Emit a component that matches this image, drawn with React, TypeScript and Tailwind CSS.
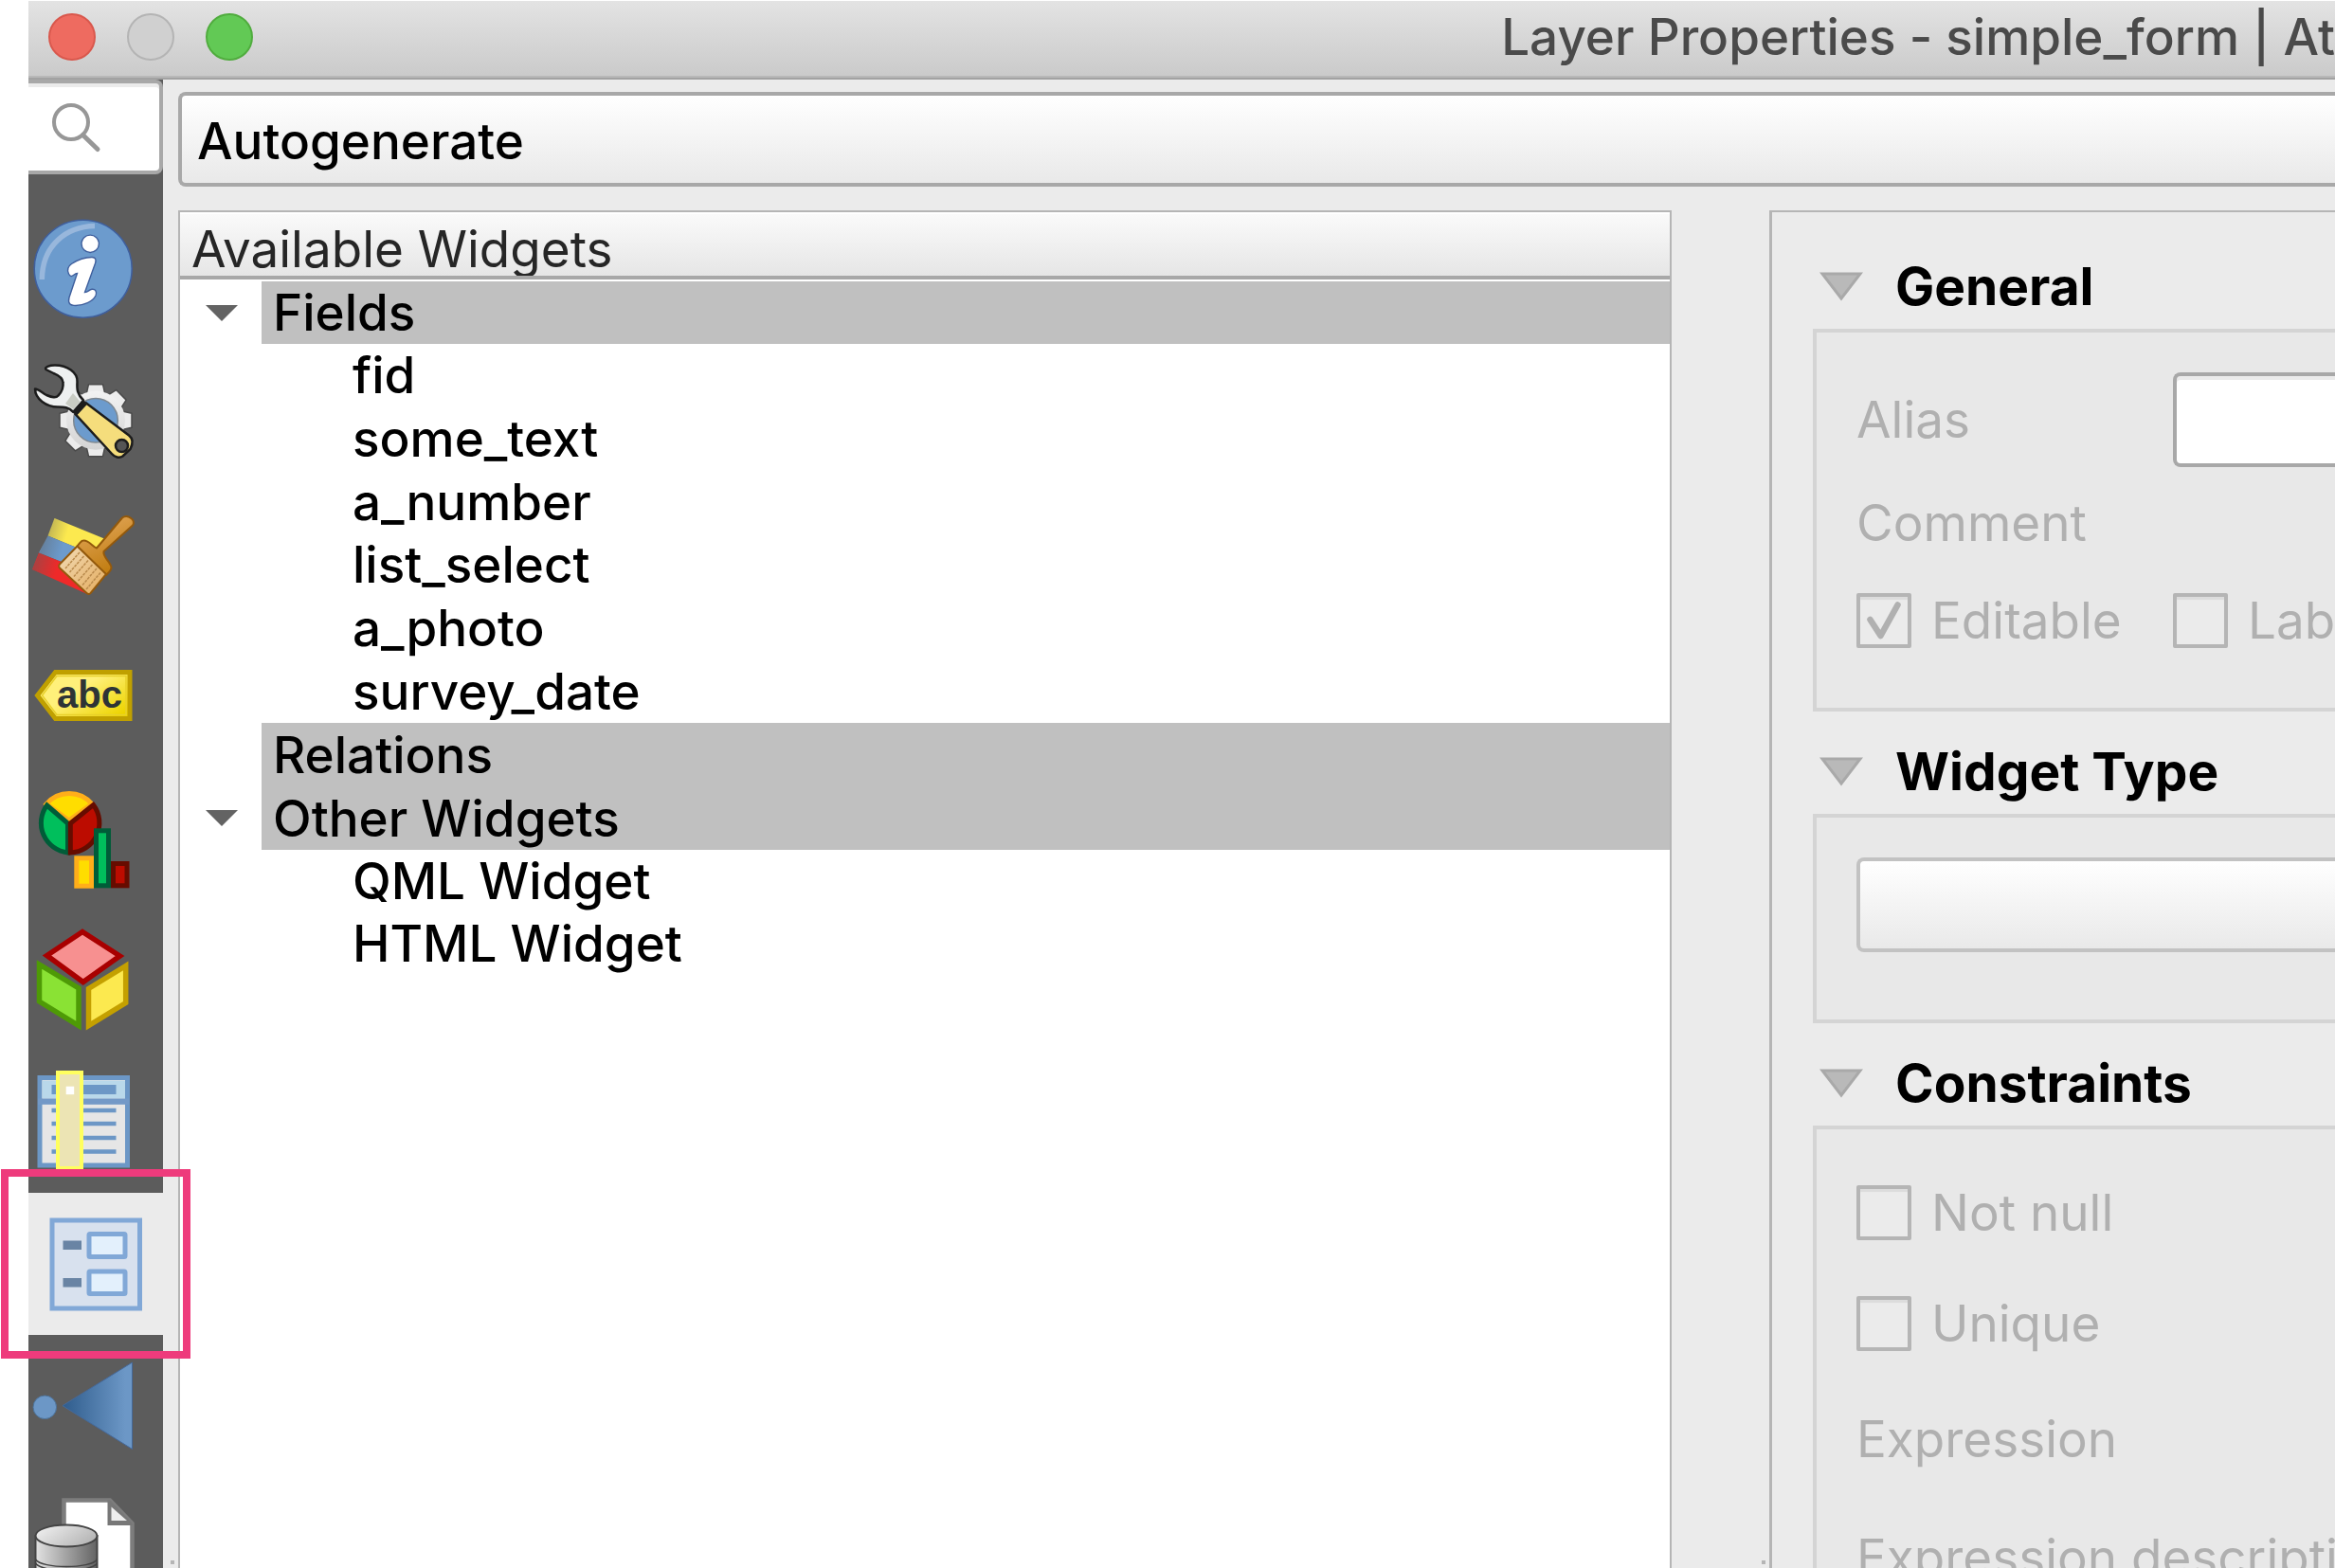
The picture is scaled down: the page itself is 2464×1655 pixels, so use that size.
import type { ReactNode } from 'react';

function Drawing({ children }: { children: ReactNode }) {
  return (
    <svg viewBox="0 0 142 150" className="block h-[150px] w-[142px]" aria-hidden="true">
      {children}
    </svg>
  );
}

function InfoIcon() {
  return (
    <Drawing>
      <circle cx="57.7" cy="74.7" r="51.5" fill="#6c9bcd" stroke="#3f5f9d" strokeWidth="1.6" />
      <path d="M70 29.500C40 30 14.500 50 14.300 86" fill="none" stroke="#98b7dc" strokeWidth="5.500" />
      <circle cx="65.200" cy="48.300" r="9.200" fill="#fff" stroke="#3f5f9d" strokeWidth="1.400" />
      <path
        d="M42.500 80C40.500 76 42 72 45.500 69.500C53 64.500 60 62.500 67 62.500C71.500 62.500 71.500 66 70.500 69L59.500 99.500C63 99.500 64 96.500 67 96.300C71 96 72.500 99 71 103C68 109.500 58 113.500 50 113.500C43.500 113.500 41.500 111 43 105L51.500 79.500C48.500 79.500 47 83 45 82.500C43.500 82.300 43 81 42.500 80Z"
        fill="#fff"
        stroke="#3f5f9d"
        strokeWidth="1.400"
      />
    </Drawing>
  );
}

function SourceIcon() {
  return (
    <Drawing>
      <defs>
        <linearGradient id="gear" x1="0" y1="0" x2="0" y2="1">
          <stop offset="0" stopColor="#f2f2f2" />
          <stop offset="1" stopColor="#d4d4d4" />
        </linearGradient>
      </defs>
      <g transform="translate(71 84.7)">
        <g fill="#ececec" stroke="#4a4a4a" strokeWidth="1.500" strokeLinejoin="round">
          {[0, 45, 90, 135, 180, 225, 270, 315].map((a) => (
            <path key={a} d="M-10 -27L-7.500 -38H7.500L10 -27Z" transform={`rotate(${a})`} />
          ))}
        </g>
        <circle r="31" fill="url(#gear)" />
        <circle r="23.300" fill="#6c9bcd" stroke="#7d8790" strokeWidth="1.500" />
      </g>
      <path
        d="M61 66.500L106 100.500C110.500 104 110 110 107.500 115L99.500 122.500C96 125 91 123.500 88 120L49.500 78Z"
        fill="#f5dd7c"
        stroke="#1c1c1c"
        strokeWidth="2.500"
      />
      <circle cx="98.500" cy="111.500" r="6.500" fill="#555" stroke="#1c1c1c" strokeWidth="2.500" />
      <path
        d="M18.500 31C16.500 28.500 22 26.500 28 26.500C41 26.500 52 34 51.500 44C51 52 51.500 57 58 63.500L47.500 76C42 70.500 38 70.500 31 70.500C19 70.500 7 62 7 51.500C11 51.500 14 55.500 19 58C25 60.500 29 61.500 31.500 58.500C35.500 54.500 37 49 36.500 44.500C36 38.500 30 36.500 26.500 35Z"
        fill="#eef0f0"
        stroke="#1c1c1c"
        strokeWidth="2.500"
        strokeLinejoin="round"
      />
      <path d="M47 56L54.500 65L47.500 73L39 67Z" fill="#c9ccc4" />
      <path d="M60 65L48.500 77.500" stroke="#1c1c1c" strokeWidth="6.500" />
    </Drawing>
  );
}

function SymbologyIcon() {
  return (
    <Drawing>
      <defs>
        <linearGradient id="fade" x1="0" y1="0" x2="1" y2="0.3">
          <stop offset="0" stopColor="#5c5c5c" stopOpacity="0.750" />
          <stop offset="0.500" stopColor="#5c5c5c" stopOpacity="0" />
        </linearGradient>
        <linearGradient id="wood" x1="0" y1="0" x2="0.400" y2="1">
          <stop offset="0" stopColor="#e6ab62" />
          <stop offset="1" stopColor="#c17d11" />
        </linearGradient>
        <linearGradient id="hair" x1="0" y1="0" x2="1" y2="1">
          <stop offset="0" stopColor="#f2dcb8" />
          <stop offset="1" stopColor="#e4ab5c" />
        </linearGradient>
      </defs>
      <path d="M27.500 38L80 59.500L68 76L20.500 56.500Z" fill="#fce94f" />
      <path d="M20.500 56.500L68 76L55 92L11 74.500Z" fill="#6c9bcd" />
      <path d="M11 74.500L62 95V118L4 92Z" fill="#ef2929" />
      <path d="M27.500 38L80 59.500L62 118L4 92Z" fill="url(#fade)" />
      <path
        d="M99 37.500C105 33.500 114 40 110 45.500L79.500 73C78 79 87 84 87.500 90C87.500 93 84.500 95.500 82 98L51.500 67.500C54 64.500 55.500 61.500 58 61.500C64 61 67.500 68 72 69.500Z"
        fill="url(#wood)"
        stroke="#93590c"
        strokeWidth="2"
        strokeLinejoin="round"
      />
      <path
        d="M51.500 67.500L82 97L65.500 117C64.500 118.500 62.500 118 61.500 117L33 90.500C32 89.500 32 87.500 33 86.500Z"
        fill="url(#hair)"
        stroke="#93590c"
        strokeWidth="2"
      />
      <path
        d="M54 74L39 91M58.500 78L43.500 95M63 82.500L48 99.500M67.500 87L52.500 104M72 91L57 108.500M76 95.500L61 113"
        stroke="#b98a4c"
        strokeWidth="1.500"
        strokeDasharray="3 1"
      />
    </Drawing>
  );
}

function LabelsIcon() {
  return (
    <Drawing>
      <defs>
        <linearGradient id="tag" x1="0" y1="0" x2="1" y2="0.800">
          <stop offset="0.450" stopColor="#fff07a" />
          <stop offset="1" stopColor="#edd400" />
        </linearGradient>
      </defs>
      <path d="M9.500 75L28.500 50.500H107V99.500H28.500Z" fill="url(#tag)" stroke="#c0a000" strokeWidth="5" />
      <path d="M14.500 75L30 54.500H103V95.500H30Z" fill="none" stroke="#e8d02a" strokeWidth="1.500" />
      <text x="30" y="87.500" fontSize="40" fontWeight="700" fill="#2e3436" className="font-['Liberation_Sans',sans-serif]">
        abc
      </text>
    </Drawing>
  );
}

function DiagramsIcon() {
  return (
    <Drawing>
      <g strokeWidth="5">
        <path d="M42.700 57L19 39.500A31.500 31.500 0 0 1 67 39.500Z" fill="#ffdd00" stroke="#ffae1a" />
        <path d="M26 37L43 53L60 37Z" fill="#ffdd00" />
        <path d="M41.500 60L19.500 41A31.500 31.500 0 0 0 41.500 91Z" fill="#00bf5c" stroke="#005c38" />
        <path d="M44.300 60L68.500 40.500A31.500 31.500 0 0 1 44.300 91Z" fill="#bc0c00" stroke="#660c00" />
        <rect x="50.800" y="96.800" width="15.700" height="29.400" fill="#ffdd00" stroke="#ffae1a" />
        <rect x="71.500" y="67.800" width="13" height="58" fill="#00bf5c" stroke="#005c38" />
        <rect x="89.500" y="102.500" width="14.500" height="23.300" fill="#bc0c00" stroke="#660c00" />
      </g>
    </Drawing>
  );
}

function CubeIcon() {
  return (
    <Drawing>
      <g strokeWidth="5.500">
        <path d="M57 24.500L96.500 50L57.700 77.500L19.500 49.500Z" fill="#f79090" stroke="#a80000" />
        <path d="M11.500 59L53 84V123.500L11.500 98Z" fill="#8ae234" stroke="#4e9a06" />
        <path d="M102.700 60.500V99.500L63.500 123.500V84.500Z" fill="#fce94f" stroke="#c4a000" />
      </g>
    </Drawing>
  );
}

function FieldsIcon() {
  return (
    <Drawing>
      <rect x="12" y="28.500" width="92.500" height="92.500" fill="#e6e6e6" stroke="#6c97c6" strokeWidth="5" />
      <rect x="14.500" y="31.500" width="87.500" height="19" fill="#b9d8ea" />
      <rect x="10" y="50.500" width="96" height="6.300" fill="#7399c7" />
      <rect x="24.500" y="36" width="68" height="10" fill="#6c97c6" />
      <path d="M24.500 63H92.500M24.500 77H92.500M24.500 92H92.500M24.500 106.500H92.500" stroke="#6c97c6" strokeWidth="4.500" />
      <rect x="31" y="23" width="25" height="101" fill="#ece4b4" stroke="#ffff5e" strokeWidth="4" />
      <rect x="39.700" y="37.700" width="8.500" height="8.500" fill="#fff" />
    </Drawing>
  );
}

function FormIcon() {
  return (
    <Drawing>
      <rect x="25" y="29" width="92.500" height="93" fill="#d8e1ee" stroke="#81a8d7" strokeWidth="5" />
      <rect x="36.500" y="50.500" width="19.500" height="9.500" fill="#6984a4" />
      <rect x="36.500" y="90" width="19.500" height="9.500" fill="#6984a4" />
      <rect x="64" y="43.500" width="38" height="24" rx="1" fill="#e3f0fc" stroke="#81a8d7" strokeWidth="5" />
      <rect x="64" y="83" width="38" height="23.500" rx="1" fill="#e3f0fc" stroke="#81a8d7" strokeWidth="5" />
    </Drawing>
  );
}

function JoinsIcon() {
  return (
    <Drawing>
      <defs>
        <linearGradient id="cone" x1="0" y1="0" x2="1" y2="0">
          <stop offset="0" stopColor="#2f5c8c" />
          <stop offset="0.900" stopColor="#6c97c6" />
        </linearGradient>
      </defs>
      <circle cx="17.300" cy="76.300" r="12.300" fill="#6c97c6" stroke="#4d7299" strokeWidth="1" />
      <path d="M36 74.700L109.500 29V120.500Z" fill="url(#cone)" stroke="#45699a" strokeWidth="1" />
    </Drawing>
  );
}

function StorageIcon() {
  return (
    <Drawing>
      <defs>
        <linearGradient id="drum" x1="0" y1="0" x2="1" y2="0">
          <stop offset="0" stopColor="#e2e2e2" />
          <stop offset="1" stopColor="#636363" />
        </linearGradient>
        <linearGradient id="lid" x1="0" y1="0" x2="1" y2="0.500">
          <stop offset="0" stopColor="#f4f4f4" />
          <stop offset="1" stopColor="#b8b8b8" />
        </linearGradient>
      </defs>
      <path d="M37.500 150V24.500H86L109.500 49V150Z" fill="#fff" stroke="#7d7d7d" strokeWidth="4.500" />
      <path d="M83.500 24.500H86L109.500 49V51H83.500Z" fill="#777" />
      <path d="M87.500 31.500L104 46H87.500Z" fill="#eee" />
      <path d="M7.500 62V150H72.500V62Z" fill="url(#drum)" stroke="#444" strokeWidth="2" />
      <ellipse cx="40" cy="62" rx="32.500" ry="11.500" fill="url(#lid)" stroke="#444" strokeWidth="2" />
      <path d="M7.500 87C14 97 66 97 72.500 87M7.500 91C14 101 66 101 72.500 91" fill="none" stroke="#444" strokeWidth="1.500" />
    </Drawing>
  );
}

const pages = [
  { name: 'Information', icon: <InfoIcon /> },
  { name: 'Source', icon: <SourceIcon /> },
  { name: 'Symbology', icon: <SymbologyIcon /> },
  { name: 'Labels', icon: <LabelsIcon /> },
  { name: 'Diagrams', icon: <DiagramsIcon /> },
  { name: '3D View', icon: <CubeIcon /> },
  { name: 'Fields', icon: <FieldsIcon /> },
  { name: 'Form', icon: <FormIcon />, active: true },
  { name: 'Joins', icon: <JoinsIcon /> },
  { name: 'Storage', icon: <StorageIcon /> },
];

function Sidebar() {
  return (
    <nav aria-label="Pages" className="flex w-[142px] shrink-0 flex-col bg-[#5c5c5c]">
      <label className="mb-[25px] flex h-[100px] shrink-0 items-center rounded-r-lg border-y-4 border-r-4 border-[#a8a8a8] bg-white shadow-[inset_0_4px_0_#ebebeb]">
        <svg viewBox="0 0 80 92" className="h-[92px] w-20 shrink-0" fill="none" stroke="#979797" strokeWidth="4" aria-hidden="true">
          <circle cx="45" cy="41" r="18" />
          <path d="M57.500 54.500L73 69.500" strokeWidth="5" strokeLinecap="round" />
        </svg>
        <input type="search" aria-label="Search" className="w-full min-w-0 bg-transparent outline-none" />
      </label>
      {pages.map((p) => (
        <div key={p.name} className="relative shrink-0">
          <button
            type="button"
            aria-label={p.name}
            aria-current={p.active ? 'page' : undefined}
            className={p.active ? 'block w-full bg-[#ebebeb]' : 'block w-full'}
          >
            {p.icon}
          </button>
          {p.active && (
            <div className="pointer-events-none absolute -top-[25px] -left-[29px] z-10 size-[200px] border-8 border-[#ee3b7c]" />
          )}
        </div>
      ))}
    </nav>
  );
}

function Toggle({ name }: { name: string }) {
  return (
    <button type="button" aria-label={`Collapse ${name}`} className="flex w-[86px] shrink-0 items-center pl-[27px]">
      <svg viewBox="0 0 34 17" className="h-[17px] w-[34px]" aria-hidden="true">
        <path d="M0 0H34L17 17Z" fill="#636363" />
      </svg>
    </button>
  );
}

function Leaves({ names }: { names: string[] }) {
  return (
    <ul className="flex flex-1 flex-col">
      {names.map((n) => (
        <li key={n} className="flex flex-1 items-center pl-[182px]">
          {n}
        </li>
      ))}
    </ul>
  );
}

function WidgetTree() {
  return (
    <section className="flex min-w-0 flex-col border-2 border-b-0 border-[#b5b5b5] bg-white">
      <h2 className="mt-0.5 h-[69px] shrink-0 overflow-hidden border-b-4 border-[#a8a8a8] bg-linear-to-b from-[#fafafa] to-[#e6e6e6] pl-3 leading-[74px] font-normal text-[#262626]">
        Available Widgets
      </h2>
      <div className="mt-0.5 flex h-[66px] shrink-0">
        <Toggle name="Fields" />
        <div className="flex flex-1 items-center bg-[#c0c0c0] pl-3">Fields</div>
      </div>
      <div className="flex h-[400px] shrink-0">
        <Leaves names={['fid', 'some_text', 'a_number', 'list_select', 'a_photo', 'survey_date']} />
      </div>
      <div className="flex h-[67px] shrink-0 pl-[86px]">
        <div className="flex flex-1 items-center bg-[#c0c0c0] pl-3">Relations</div>
      </div>
      <div className="flex h-[67px] shrink-0">
        <Toggle name="Other Widgets" />
        <div className="flex flex-1 items-center bg-[#c0c0c0] pl-3">Other Widgets</div>
      </div>
      <div className="flex h-[132px] shrink-0">
        <Leaves names={['QML Widget', 'HTML Widget']} />
      </div>
    </section>
  );
}

function Group({ title, className, children }: { title: string; className: string; children: ReactNode }) {
  return (
    <section className="shrink-0">
      <h2 className="flex h-[108px] items-center pt-[18px] text-[55px] font-bold">
        <button type="button" aria-expanded="true" className="flex items-center gap-[34px] pl-[7px]">
          <svg viewBox="0 0 46 31" className="h-[31px] w-[46px]" aria-hidden="true">
            <path d="M3 2H43L23 28Z" fill="#b9b9b9" stroke="#a9a9a9" strokeWidth="3" />
          </svg>
          {title}
        </button>
      </h2>
      <div className={`border-4 border-r-0 border-[#d4d4d4] bg-[#e8e8e8] pl-[42px] text-[#b0b0b0] ${className}`}>{children}</div>
    </section>
  );
}

function Check({ label, checked }: { label: string; checked?: boolean }) {
  return (
    <label className="flex h-[58px] items-center gap-[21px] whitespace-nowrap">
      <span className="grid shrink-0">
        <input
          type="checkbox"
          disabled
          defaultChecked={checked}
          className="col-start-1 row-start-1 size-[58px] appearance-none rounded-xs border-4 border-[#b5b5b5] bg-[#ebebeb] shadow-[inset_0_3px_1px_#dcdcdc]"
        />
        {checked && (
          <svg viewBox="0 0 58 58" className="col-start-1 row-start-1 size-[58px]" fill="none" aria-hidden="true">
            <path d="M14.500 28L25.500 45L43.500 12.500" stroke="#b0b0b0" strokeWidth="6.500" strokeLinecap="round" strokeLinejoin="round" />
          </svg>
        )}
      </span>
      {label}
    </label>
  );
}

function Settings() {
  return (
    <div className="flex min-w-0 flex-col overflow-hidden border-t-2 border-l-3 border-[#b5b5b5] pt-[15px] pl-[43px] font-normal">
      <Group title="General" className="pt-[42px] pb-[63px]">
        <div className="grid grid-cols-[334px_1fr] items-center">
          <label htmlFor="alias">Alias</label>
          <input
            id="alias"
            type="text"
            disabled
            className="h-[100px] w-full min-w-0 rounded-l-lg border-4 border-r-0 border-[#a8a8a8] bg-white px-4 shadow-[inset_0_4px_0_#ebebeb]"
          />
        </div>
        <p className="mt-7">Comment</p>
        <div className="mt-[43px] grid grid-cols-[334px_1fr]">
          <Check label="Editable" checked />
          <Check label="Lab" />
        </div>
      </Group>
      <Group title="Widget Type" className="pt-[42px] pb-[71px]">
        <select
          aria-label="Widget type"
          disabled
          className="block h-[100px] w-full appearance-none rounded-l-lg border-4 border-r-0 border-[#c2c2c2] bg-linear-to-b from-white to-[#e9e9e9] opacity-100"
        />
      </Group>
      <Group title="Constraints" className="pt-[59px]">
        <Check label="Not null" />
        <div className="mt-[59px]">
          <Check label="Unique" />
        </div>
        <p className="mt-[62px]">Expression</p>
        <p className="mt-[63px] whitespace-nowrap">Expression descripti</p>
      </Group>
    </div>
  );
}

function Grip() {
  return <span className="mb-1 ml-auto size-1 bg-[#b5b5b5]" />;
}

export default function App() {
  return (
    <div className="h-screen overflow-hidden bg-white pt-px pl-[30px] font-['Inter',sans-serif] text-[53px] leading-[62px] font-[450] text-black">
      <div className="flex h-full flex-col bg-[#ebebeb]">
        <header className="flex h-[83px] shrink-0 items-center gap-[33px] border-b-2 border-[#a2a2a2] bg-linear-to-b from-[#e3e3e3] to-[#cacaca] pb-1.5 pl-[21px] shadow-[inset_0_-2px_0_#b8b8b8]">
          <button type="button" aria-label="Close" className="size-[50px] shrink-0 rounded-full border-2 border-[#d9584d] bg-[#ee6b60]" />
          <button type="button" aria-label="Minimize" className="size-[50px] shrink-0 rounded-full border-2 border-[#b4b4b4] bg-[#d0d0d0]" />
          <button type="button" aria-label="Zoom" className="size-[50px] shrink-0 rounded-full border-2 border-[#50ac3e] bg-[#62c955]" />
          <h1 className="flex-1 overflow-hidden text-right whitespace-nowrap text-[#4a4a4a]">
            Layer Properties - simple_form | At
          </h1>
        </header>
        <div className="flex min-h-0 flex-1">
          <Sidebar />
          <div className="flex w-4 shrink-0 items-end pr-1">
            <Grip />
          </div>
          <main className="flex min-w-0 flex-1 flex-col pt-[13px]">
            <select
              aria-label="Form layout"
              className="h-[100px] w-full shrink-0 appearance-none rounded-l-lg border-4 border-r-0 border-[#a8a8a8] bg-linear-to-b from-white to-[#e9e9e9] pt-1 pl-4"
            >
              <option>Autogenerate</option>
            </select>
            <div className="mt-[25px] grid min-h-0 flex-1 grid-cols-[1576fr_103px_597fr] grid-rows-[minmax(0,1fr)]">
              <WidgetTree />
              <div className="flex items-end pr-1">
                <Grip />
              </div>
              <Settings />
            </div>
          </main>
        </div>
      </div>
    </div>
  );
}
